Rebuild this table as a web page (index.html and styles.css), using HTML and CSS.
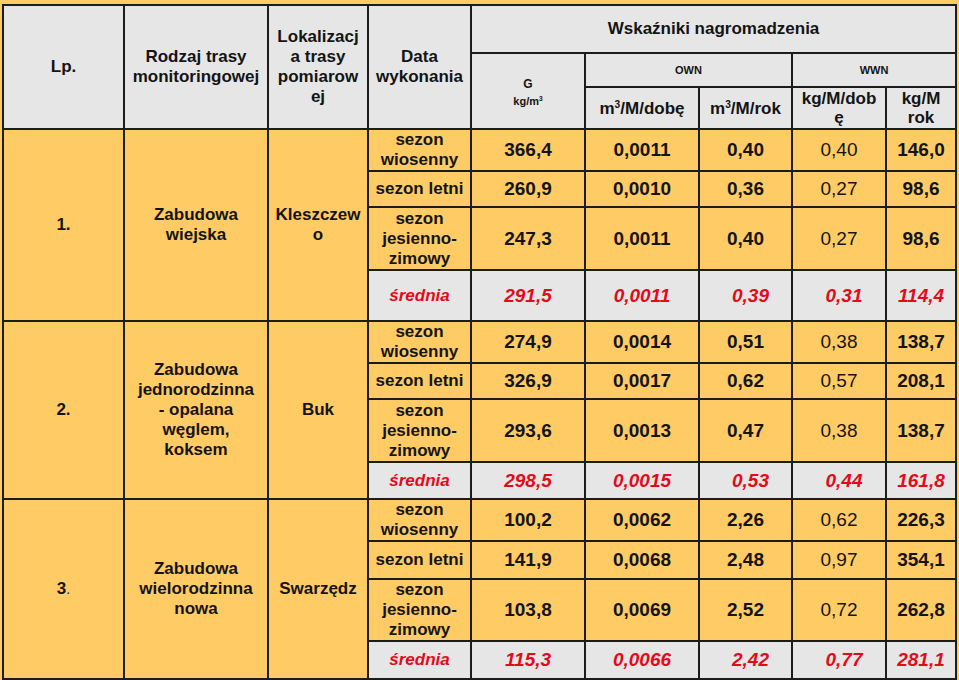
FILE: index.html
```html
<!DOCTYPE html>
<html lang="pl">
<head>
<meta charset="utf-8">
<title>Wskaźniki nagromadzenia</title>
<link rel="stylesheet" href="styles.css">
</head>
<body>
<table class="tbl">
  <colgroup>
    <col class="c-lp"><col class="c-rodz"><col class="c-lok"><col class="c-data">
    <col class="c-g"><col class="c-own1"><col class="c-own2"><col class="c-wwn1"><col class="c-wwn2">
  </colgroup>
  <thead>
    <tr class="h1">
      <th rowspan="3">Lp.</th>
      <th rowspan="3">Rodzaj trasy<br>monitoringowej</th>
      <th rowspan="3">Lokalizacj<br>a trasy<br>pomiarow<br>ej</th>
      <th rowspan="3">Data<br>wykonania</th>
      <th colspan="5">Wskaźniki nagromadzenia</th>
    </tr>
    <tr class="h2">
      <th rowspan="2" class="g-head"><span class="g">G</span><br><span class="gu">kg/m<sup>3</sup></span></th>
      <th colspan="2" class="small">OWN</th>
      <th colspan="2" class="small">WWN</th>
    </tr>
    <tr class="h3">
      <th>m<sup>3</sup>/M/dobę</th>
      <th>m<sup>3</sup>/M/rok</th>
      <th>kg/M/dob<br>ę</th>
      <th>kg/M<br>rok</th>
    </tr>
  </thead>
  <tbody>
    <tr class="r-w1">
      <td rowspan="4" class="side">1.</td>
      <td rowspan="4" class="side">Zabudowa<br>wiejska</td>
      <td rowspan="4" class="side">Kleszczew<br>o</td>
      <td class="season">sezon<br>wiosenny</td>
      <td class="num">366,4</td><td class="num">0,0011</td><td class="num">0,40</td><td class="num reg">0,40</td><td class="num">146,0</td>
    </tr>
    <tr class="r-l1">
      <td class="season">sezon letni</td>
      <td class="num">260,9</td><td class="num">0,0010</td><td class="num">0,36</td><td class="num reg">0,27</td><td class="num">98,6</td>
    </tr>
    <tr class="r-j1">
      <td class="season">sezon<br>jesienno-<br>zimowy</td>
      <td class="num">247,3</td><td class="num">0,0011</td><td class="num">0,40</td><td class="num reg">0,27</td><td class="num">98,6</td>
    </tr>
    <tr class="avg r-s1">
      <td class="avg-label">średnia</td>
      <td class="num">291,5</td><td class="num">0,0011</td><td class="num shift">0,39</td><td class="num shift">0,31</td><td class="num">114,4</td>
    </tr>

    <tr class="r-w2">
      <td rowspan="4" class="side">2.</td>
      <td rowspan="4" class="side">Zabudowa<br>jednorodzinna<br>- opalana<br>węglem,<br>koksem</td>
      <td rowspan="4" class="side">Buk</td>
      <td class="season">sezon<br>wiosenny</td>
      <td class="num">274,9</td><td class="num">0,0014</td><td class="num">0,51</td><td class="num reg">0,38</td><td class="num">138,7</td>
    </tr>
    <tr class="r-l2">
      <td class="season">sezon letni</td>
      <td class="num">326,9</td><td class="num">0,0017</td><td class="num">0,62</td><td class="num reg">0,57</td><td class="num">208,1</td>
    </tr>
    <tr class="r-j2">
      <td class="season">sezon<br>jesienno-<br>zimowy</td>
      <td class="num">293,6</td><td class="num">0,0013</td><td class="num">0,47</td><td class="num reg">0,38</td><td class="num">138,7</td>
    </tr>
    <tr class="avg r-s2">
      <td class="avg-label">średnia</td>
      <td class="num">298,5</td><td class="num">0,0015</td><td class="num shift">0,53</td><td class="num shift">0,44</td><td class="num">161,8</td>
    </tr>

    <tr class="r-w3">
      <td rowspan="4" class="side">3<span class="thin">.</span></td>
      <td rowspan="4" class="side">Zabudowa<br>wielorodzinna<br>nowa</td>
      <td rowspan="4" class="side">Swarzędz</td>
      <td class="season">sezon<br>wiosenny</td>
      <td class="num">100,2</td><td class="num">0,0062</td><td class="num">2,26</td><td class="num reg">0,62</td><td class="num">226,3</td>
    </tr>
    <tr class="r-l3">
      <td class="season">sezon letni</td>
      <td class="num">141,9</td><td class="num">0,0068</td><td class="num">2,48</td><td class="num reg">0,97</td><td class="num">354,1</td>
    </tr>
    <tr class="r-j3">
      <td class="season">sezon<br>jesienno-<br>zimowy</td>
      <td class="num">103,8</td><td class="num">0,0069</td><td class="num">2,52</td><td class="num reg">0,72</td><td class="num">262,8</td>
    </tr>
    <tr class="avg r-s3">
      <td class="avg-label">średnia</td>
      <td class="num">115,3</td><td class="num">0,0066</td><td class="num shift">2,42</td><td class="num shift">0,77</td><td class="num">281,1</td>
    </tr>
  </tbody>
</table>
</body>
</html>
```

FILE: styles.css
```css
html, body {
  margin: 0;
  padding: 0;
  background: #ffcb65;
}

body {
  padding: 4px 0 0 2px;
  font-family: "Liberation Sans", Arial, sans-serif;
  color: #141414;
}

.tbl {
  border-collapse: collapse;
  table-layout: fixed;
  width: 953px;
}

.c-lp { width: 121px; }
.c-rodz { width: 144px; }
.c-lok { width: 100px; }
.c-data { width: 103px; }
.c-g { width: 114px; }
.c-own1 { width: 114px; }
.c-own2 { width: 93px; }
.c-wwn1 { width: 94px; }
.c-wwn2 { width: 70px; }

.tbl th,
.tbl td {
  border: 2px solid #1c1c1c;
  padding: 0;
  text-align: center;
  vertical-align: middle;
  line-height: 20px;
  overflow: hidden;
}

.tbl th {
  background: #e6e6e6;
  font-size: 17px;
  font-weight: bold;
}

.tbl td {
  background: #ffcb65;
  font-size: 17px;
  font-weight: bold;
}

sup {
  font-size: 0.6em;
  line-height: 0;
  vertical-align: 0.6em;
}

.h1 { height: 48px; }
.h2 { height: 34px; }
.h3 { height: 42px; }

.h3 th { line-height: 19px; }

.tbl th.small {
  font-size: 11px;
}

.tbl th.g-head {
  vertical-align: top;
  padding-top: 21px;
  line-height: 16px;
}

.g { font-size: 12px; }
.gu { font-size: 11px; }

.r-w1 { height: 41px; }
.r-l1 { height: 36px; }
.r-j1 { height: 63px; }
.r-s1 { height: 51px; }
.r-w2 { height: 42px; }
.r-l2 { height: 36px; }
.r-j2 { height: 63px; }
.r-s2 { height: 37px; }
.r-w3 { height: 42px; }
.r-l3 { height: 38px; }
.r-j3 { height: 61px; }
.r-s3 { height: 38px; }

.tbl td.num {
  font-size: 19px;
}

.tbl td.reg {
  font-weight: normal;
}

.tbl tr.avg td {
  background: #e6e6e6;
  color: #e30b1a;
  font-style: italic;
}

.tbl td.avg-label {
  font-size: 17px;
}

.tbl td.shift {
  padding-left: 10px;
}

.thin {
  font-weight: normal;
  font-size: 14px;
}
```
